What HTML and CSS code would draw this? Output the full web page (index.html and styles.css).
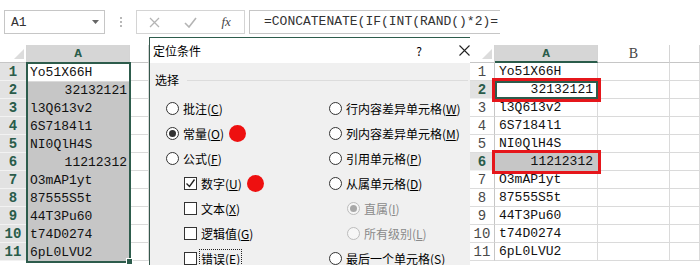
FILE: index.html
```html
<!DOCTYPE html>
<html lang="zh-CN">
<head>
  <meta charset="UTF-8" />
  <title>定位条件</title>
  <link rel="stylesheet" href="styles.css">
</head>
<body>

  <div class="toolbar">
    <div class="namebox">
      <span>A1</span>
      <svg width="7" height="5" viewBox="0 0 7 5"><path d="M0 0h7L3.5 4z" fill="#666"/></svg>
    </div>
    <div class="grip"><i></i><i></i><i></i></div>
    <div class="fxbtns">
      <span><svg width="11" height="11" viewBox="0 0 11 11"><path d="M1 1L10 10M10 1L1 10" stroke="#b4b4b4" stroke-width="1.3"/></svg></span>
      <span><svg width="13" height="11" viewBox="0 0 13 11"><path d="M1 6l4 4 7-9" stroke="#b4b4b4" stroke-width="1.6" fill="none"/></svg></span>
      <span class="fx">fx</span>
    </div>
    <div class="formula">=CONCATENATE(IF(INT(RAND()*2)=</div>
  </div>

  <div class="main">

    <div class="sheet left">
      <div class="col rhcol">
        <div class="hd corner"><b class="tri"></b></div>
        <div class="rh sel-rh">1</div>
        <div class="rh sel-rh">2</div>
        <div class="rh sel-rh">3</div>
        <div class="rh sel-rh">4</div>
        <div class="rh sel-rh">5</div>
        <div class="rh sel-rh">6</div>
        <div class="rh sel-rh">7</div>
        <div class="rh sel-rh">8</div>
        <div class="rh sel-rh">9</div>
        <div class="rh sel-rh">10</div>
        <div class="rh sel-rh">11</div>
      </div>
      <div class="col acol">
        <div class="hd hd-sel">A</div>
        <div class="selection">
          <div class="c active">Yo51X66H</div>
          <div class="c grey num">32132121</div>
          <div class="c grey">l3Q613v2</div>
          <div class="c grey">6S7184l1</div>
          <div class="c grey">NI0QlH4S</div>
          <div class="c grey num">11212312</div>
          <div class="c grey">O3mAP1yt</div>
          <div class="c grey">87555S5t</div>
          <div class="c grey">44T3Pu60</div>
          <div class="c grey">t74D0274</div>
          <div class="c grey last">6pL0LVU2</div>
          <b class="handle"></b>
        </div>
      </div>
      <div class="col bcol">
        <div class="hd"></div>
        <div class="c"></div><div class="c"></div><div class="c"></div><div class="c"></div>
        <div class="c"></div><div class="c"></div><div class="c"></div><div class="c"></div>
        <div class="c"></div><div class="c"></div><div class="c"></div>
      </div>
    </div>

    <div class="dialog">
      <div class="dlg-title">
        <span>定位条件</span>
        <span class="help">?</span>
        <svg class="close" width="11" height="11" viewBox="0 0 11 11"><path d="M0.5 0.5L10.5 10.5M10.5 0.5L0.5 10.5" stroke="#222" stroke-width="1.1"/></svg>
      </div>
      <div class="dlg-body">
        <div class="legend">选择</div>
        <div class="options">
          <div class="opt"><span class="radio"></span>批注(<u>C</u>)</div>
          <div class="opt"><span class="radio on"></span>常量(<u>O</u>)<span class="mark"></span></div>
          <div class="opt"><span class="radio"></span>公式(<u>F</u>)</div>
          <div class="opt sub"><span class="check"><svg width="11" height="11" viewBox="0 0 11 11"><path d="M1.5 5.5l3 3 5-7" stroke="#222" stroke-width="1.4" fill="none"/></svg></span>数字(<u>U</u>)<span class="mark"></span></div>
          <div class="opt sub"><span class="check"></span>文本(<u>X</u>)</div>
          <div class="opt sub"><span class="check"></span>逻辑值(<u>G</u>)</div>
          <div class="opt sub"><span class="check"></span><span class="focus">错误(<u>E</u>)</span></div>

          <div class="opt"><span class="radio"></span>行内容差异单元格(<u>W</u>)</div>
          <div class="opt"><span class="radio"></span>列内容差异单元格(<u>M</u>)</div>
          <div class="opt"><span class="radio"></span>引用单元格(<u>P</u>)</div>
          <div class="opt"><span class="radio"></span>从属单元格(<u>D</u>)</div>
          <div class="opt sub off"><span class="radio on"></span>直属(<u>I</u>)</div>
          <div class="opt sub off"><span class="radio"></span>所有级别(<u>L</u>)</div>
          <div class="opt"><span class="radio"></span>最后一个单元格(<u>S</u>)</div>
        </div>
      </div>
    </div>

    <div class="sheet right">
      <div class="col rhcol">
        <div class="hd corner"><b class="tri"></b></div>
        <div class="rh">1</div>
        <div class="rh sel-rh">2</div>
        <div class="rh">3</div>
        <div class="rh">4</div>
        <div class="rh">5</div>
        <div class="rh sel-rh">6</div>
        <div class="rh">7</div>
        <div class="rh">8</div>
        <div class="rh">9</div>
        <div class="rh">10</div>
        <div class="rh">11</div>
      </div>
      <div class="col acol">
        <div class="hd hd-sel hd-line">A</div>
        <div class="c">Yo51X66H</div>
        <div class="c num boxed cur">32132121</div>
        <div class="c">l3Q613v2</div>
        <div class="c">6S7184l1</div>
        <div class="c">NI0QlH4S</div>
        <div class="c num grey boxed">11212312</div>
        <div class="c">O3mAP1yt</div>
        <div class="c">87555S5t</div>
        <div class="c">44T3Pu60</div>
        <div class="c">t74D0274</div>
        <div class="c">6pL0LVU2</div>
      </div>
      <div class="col bcol wide">
        <div class="hd letter">B</div>
        <div class="c"></div><div class="c"></div><div class="c"></div><div class="c"></div>
        <div class="c"></div><div class="c"></div><div class="c"></div><div class="c"></div>
        <div class="c"></div><div class="c"></div><div class="c"></div>
      </div>
      <div class="col ccol">
        <div class="hd"></div>
        <div class="c"></div><div class="c"></div><div class="c"></div><div class="c"></div>
        <div class="c"></div><div class="c"></div><div class="c"></div><div class="c"></div>
        <div class="c"></div><div class="c"></div><div class="c"></div>
      </div>
    </div>

  </div>

</body>
</html>
```

FILE: styles.css
```css
body {
  margin: 0;
  width: 700px;
  height: 265px;
  overflow: hidden;
  background: #fff;
  font-family: "Noto Sans CJK SC", sans-serif;
  color: #000;
}
.toolbar {
  display: flex;
  align-items: flex-start;
  height: 37px;
  padding: 10px 0 0 4px;
  box-sizing: border-box;
}
.namebox {
  width: 101px;
  height: 24px;
  border: 1px solid #c6c6c6;
  box-sizing: border-box;
  display: flex;
  align-items: center;
  justify-content: space-between;
  padding: 0 5px 0 6px;
  font: 13px "Liberation Mono", monospace;
  color: #333;
}
.grip {
  width: 31px;
  display: flex;
  flex-direction: column;
  align-items: center;
  gap: 2px;
  padding-top: 7px;
}
.grip i {
  display: block;
  width: 2px;
  height: 2px;
  background: #b8b8b8;
}
.fxbtns {
  width: 109px;
  height: 24px;
  border: 1px solid #d4d4d4;
  box-sizing: border-box;
  display: flex;
  align-items: center;
}
.fxbtns span {
  width: 36px;
  display: flex;
  justify-content: center;
  align-items: center;
}
.fxbtns .fx {
  font: italic 13px "Liberation Serif", serif;
  color: #444;
}
.formula {
  margin-left: 4px;
  width: 251px;
  height: 24px;
  box-sizing: border-box;
  border: 1px solid #c6c6c6;
  border-right: none;
  padding-left: 14px;
  font: 13px/22px "Liberation Mono", monospace;
  color: #333;
  white-space: nowrap;
  overflow: hidden;
}
.main {
  display: flex;
  height: 228px;
}

/* spreadsheet parts */
.sheet {
  display: flex;
  padding-top: 8px;
  background: #fff;
}
.sheet.left {
  width: 149px;
}
.sheet.right {
  width: 230px;
}
.col {
  display: flex;
  flex-direction: column;
}
.rhcol { width: 27px; }
.right .rhcol { width: 25px; }
.acol { width: 103px; }
.bcol { width: 19px; }
.bcol.wide { width: 72px; }
.ccol { width: 30px; }
.hd {
  height: 18px;
  box-sizing: border-box;
  border-right: 1px solid #d4d4d4;
  border-bottom: 1px solid #c6c6c6;
  text-align: center;
  font: bold 10px/17px "DejaVu Sans", sans-serif;
  color: #2a5c4a;
}
.hd.corner {
  display: flex;
  justify-content: flex-end;
  align-items: flex-end;
  padding: 0 2px 3px 0;
}
.tri {
  width: 0;
  height: 0;
  border-left: 10px solid transparent;
  border-bottom: 10px solid #dcdcdc;
}
.hd-sel {
  background: #d6d6d6;
}
.hd-line {
  border-bottom: 2px solid #2a5c4a;
}
.hd.letter {
  font: 14px/17px "Liberation Serif", serif;
  color: #444;
}
.rh {
  height: 18px;
  box-sizing: border-box;
  border-right: 1px solid #c6c6c6;
  border-bottom: 1px solid #dcdcdc;
  text-align: center;
  font: 14px/18px "Liberation Mono", monospace;
  color: #4a4a4a;
}
.rh.sel-rh {
  background: #e2e2e2;
  border-bottom-color: #f2f2f2;
  font-weight: bold;
  color: #2a5c4a;
}
.c {
  height: 18px;
  box-sizing: border-box;
  border-right: 1px solid #dadada;
  border-bottom: 1px solid #dadada;
  padding: 0 4px 0 4px;
  font: 13px/18px "Liberation Mono", monospace;
  color: #111;
  white-space: nowrap;
  overflow: hidden;
}
.c.num {
  text-align: right;
}
.c.grey {
  background: #c6c6c6;
  border-color: #c6c6c6;
}
.selection {
  position: relative;
  margin: -1px -1px 0 -1px;
  border: 2px solid #2d5c4c;
}
.selection .c {
  padding-left: 2px;
  border-right: none;
}
.selection .c.num {
  padding-right: 2px;
}
.selection .c.last {
  height: 17px;
  border-bottom: none;
}
.handle {
  position: absolute;
  right: -4px;
  bottom: -4px;
  width: 5px;
  height: 5px;
  background: #2d5c4c;
  border: 1px solid #fff;
}
.c.boxed {
  outline: 3px solid #e5161b;
  outline-offset: 0;
  position: relative;
}
.c.cur {
  border: 2px solid #2d5c4c;
  line-height: 14px;
  padding-right: 3px;
}

/* dialog */
.dialog {
  width: 320px;
  border-left: 1px solid #36594d;
  background: #f0f0f0;
}
.dlg-title {
  height: 26px;
  box-sizing: border-box;
  background: #fff;
  border-top: 1px solid #2d5c4c;
  display: flex;
  align-items: center;
  padding-left: 3px;
  font-size: 12px;
}
.dlg-title .help {
  margin-left: auto;
  margin-right: 37px;
}
.dlg-title .close {
  margin-right: 0;
}
.dlg-body {
  padding: 10px 0 0 5px;
}
.legend {
  display: flex;
  align-items: center;
  font-size: 12px;
  line-height: 14px;
}
.legend::after {
  content: "";
  flex: 1;
  height: 1px;
  margin: 0 2px 0 8px;
  background: #dcdcdc;
}
.options {
  margin-top: 9px;
  padding-left: 11px;
  display: grid;
  grid-template-columns: 163px 1fr;
  grid-template-rows: repeat(7, 25px);
  grid-auto-flow: column;
}
.opt {
  display: flex;
  align-items: center;
  font-size: 12px;
  white-space: nowrap;
}
.opt.sub {
  margin-left: 18px;
}
.opt.off {
  color: #8a8a8a;
}
.radio,
.check {
  width: 13px;
  height: 13px;
  box-sizing: border-box;
  border: 1px solid #333;
  background: #fff;
  margin-right: 4px;
  display: flex;
  align-items: center;
  justify-content: center;
}
.radio {
  border-radius: 50%;
}
.radio.on::after {
  content: "";
  width: 7px;
  height: 7px;
  border-radius: 50%;
  background: #333;
}
.off .radio {
  border-color: #bcbcbc;
  background: #f6f6f6;
}
.off .radio.on::after {
  background: #a8a8a8;
}
.mark {
  width: 17px;
  height: 17px;
  border-radius: 50%;
  background: #ee1010;
  margin-left: 5px;
}
.focus {
  border: 1px dotted #222;
  padding: 0 1px;
  margin-left: -2px;
  line-height: 17px;
}
```
